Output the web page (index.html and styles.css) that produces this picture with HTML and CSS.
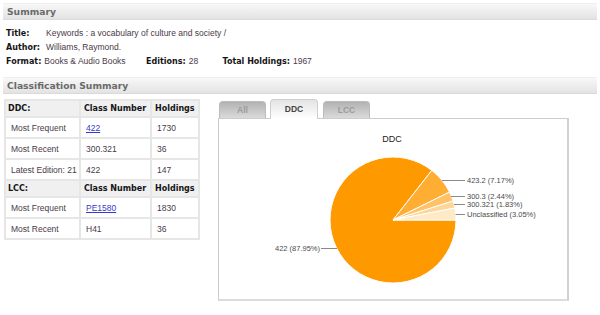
FILE: index.html
```html
<!DOCTYPE html>
<html lang="en">
<head>
  <meta charset="UTF-8" />
  <title>Classify - Keywords</title>
  <link rel="stylesheet" href="styles.css">
</head>
<body>

  <div class="section-bar">Summary</div>
  <div class="summary">
    <div class="row"><span class="label key">Title:</span><span class="value">Keywords : a vocabulary of culture and society /</span></div>
    <div class="row"><span class="label key">Author:</span><span class="value">Williams, Raymond.</span></div>
    <div class="row">
      <span class="label">Format:</span><span class="value">Books &amp; Audio Books</span>
      <span class="label editions">Editions:</span><span class="value">28</span>
      <span class="label total">Total Holdings:</span><span class="value">1967</span>
    </div>
  </div>

  <div class="section-bar">Classification Summary</div>

  <div class="classification">
    <table class="class-table">
      <colgroup>
        <col class="col-type">
        <col class="col-number">
        <col class="col-holdings">
      </colgroup>
      <tr class="head"><th>DDC:</th><th class="num-head">Class Number</th><th class="num-head">Holdings</th></tr>
      <tr><td>Most Frequent</td><td><a href="#">422</a></td><td>1730</td></tr>
      <tr><td>Most Recent</td><td>300.321</td><td>36</td></tr>
      <tr><td>Latest Edition: 21</td><td>422</td><td>147</td></tr>
      <tr class="head"><th>LCC:</th><th class="num-head">Class Number</th><th class="num-head">Holdings</th></tr>
      <tr><td>Most Frequent</td><td><a href="#">PE1580</a></td><td>1830</td></tr>
      <tr><td>Most Recent</td><td>H41</td><td>36</td></tr>
    </table>

    <div class="chart-panel">
      <div class="tabs">
        <div class="tab">All</div>
        <div class="tab active">DDC</div>
        <div class="tab last">LCC</div>
      </div>
      <div class="chart-box">
        <svg class="pie" width="349" height="180" viewBox="0 0 349 180">
          <text class="chart-title" x="173" y="23" text-anchor="middle">DDC</text>
          <g stroke="#fff" stroke-width="1">
            <path d="M174,101 L237,101 A63,63 0 1 1 212.79,51.36 Z" fill="#ff9900"/>
            <path d="M174,101 L212.79,51.36 A63,63 0 0 1 230.48,73.09 Z" fill="#ffad33"/>
            <path d="M174,101 L230.48,73.09 A63,63 0 0 1 234.08,82.06 Z" fill="#ffc266"/>
            <path d="M174,101 L234.08,82.06 A63,63 0 0 1 235.85,89.02 Z" fill="#ffd699"/>
            <path d="M174,101 L235.85,89.02 A63,63 0 0 1 237,101 Z" fill="#ffe9c6"/>
          </g>
          <g stroke="#8a8a8a" stroke-width="1">
            <line x1="223" y1="61.5" x2="246" y2="61.5"/>
            <line x1="232" y1="77.5" x2="246" y2="77.5"/>
            <line x1="235" y1="85.5" x2="246" y2="85.5"/>
            <line x1="236.5" y1="95.5" x2="246" y2="95.5"/>
            <line x1="102" y1="129.5" x2="118" y2="129.5"/>
          </g>
          <g class="slice-label">
            <text x="248" y="64">423.2 (7.17%)</text>
            <text x="248" y="80">300.3 (2.44%)</text>
            <text x="248" y="88">300.321 (1.83%)</text>
            <text x="248" y="98">Unclassified (3.05%)</text>
            <text x="101" y="132" text-anchor="end">422 (87.95%)</text>
          </g>
        </svg>
      </div>
    </div>
  </div>

</body>
</html>
```

FILE: styles.css
```css
body {
  margin: 0;
  padding: 3px;
  font-family: "Liberation Sans", Arial, sans-serif;
  font-size: 8.5px;
  color: #4a3a48;
  background: #fff;
}

.section-bar {
  box-sizing: border-box;
  height: 17px;
  line-height: 15px;
  padding-left: 4px;
  font-family: "DejaVu Sans", Verdana, sans-serif;
  font-weight: bold;
  font-size: 9.2px;
  color: #6a6a6a;
  background: linear-gradient(#f8f8f8, #e3e3e3);
  border-top: 1px solid #eee;
  border-bottom: 1px solid #dadada;
}

.summary {
  margin: 6px 0 9px;
  padding-left: 3px;
}

.row {
  height: 14px;
  line-height: 14px;
  white-space: nowrap;
}

.label {
  font-family: "DejaVu Sans", Verdana, sans-serif;
  font-weight: bold;
  font-size: 8px;
  color: #151515;
  margin-right: 3px;
}

.label.key {
  display: inline-block;
  width: 37px;
}

.label.editions {
  margin-left: 18px;
}

.label.total {
  margin-left: 22px;
}

.classification {
  display: flex;
  align-items: flex-start;
  margin-top: 5px;
}

.class-table {
  border-collapse: collapse;
  border: 2px solid #d4d4d4;
  table-layout: fixed;
  width: 194px;
  margin-left: 1px;
}

.col-type {
  width: 75px;
}

.col-number {
  width: 71px;
}

.col-holdings {
  width: 48px;
}

.class-table th,
.class-table td {
  border: 2px solid #e6e6e6;
  text-align: left;
  white-space: nowrap;
  padding: 0 0 0 5px;
}

.class-table th {
  height: 15px;
  padding-left: 2px;
  background: #f0f0f0;
  font-family: "DejaVu Sans", Verdana, sans-serif;
  font-weight: bold;
  font-size: 8px;
  color: #151515;
}

.class-table th.num-head {
  padding-left: 3px;
}

.class-table td {
  height: 19px;
}

.class-table a {
  color: #3838d0;
}

.chart-panel {
  margin-left: 18px;
}

.tabs {
  display: flex;
  align-items: flex-end;
  gap: 4px;
  height: 19px;
  padding-left: 1px;
}

.tab {
  box-sizing: border-box;
  width: 47px;
  height: 17px;
  line-height: 16px;
  border: 1px solid #bcbcbc;
  border-bottom: none;
  border-radius: 4px 4px 0 0;
  background: linear-gradient(#b2b2b2, #dadada);
  color: #9c9c9c;
  font-weight: bold;
  font-size: 8.5px;
  text-align: center;
}

.tab.active {
  position: relative;
  z-index: 1;
  width: 48px;
  height: 20px;
  line-height: 18px;
  margin-bottom: -1px;
  border-color: #cfcfcf;
  background: linear-gradient(#e4e4e4, #f4f4f4 60%, #fff);
  color: #444;
}

.tab.last {
  margin-left: 1px;
}

.chart-box {
  width: 348px;
  height: 180px;
  border: 1px solid #cccccc;
  border-right: 2px solid #d0d0d0;
  border-bottom: 2px solid #dcdcdc;
  background: #fff;
}

.pie {
  display: block;
}

.chart-title {
  font-family: "Liberation Sans", Arial, sans-serif;
  font-size: 9px;
  fill: #222;
}

.slice-label {
  font-family: "Liberation Sans", Arial, sans-serif;
  font-size: 7.5px;
  fill: #4a4a4a;
}
```
